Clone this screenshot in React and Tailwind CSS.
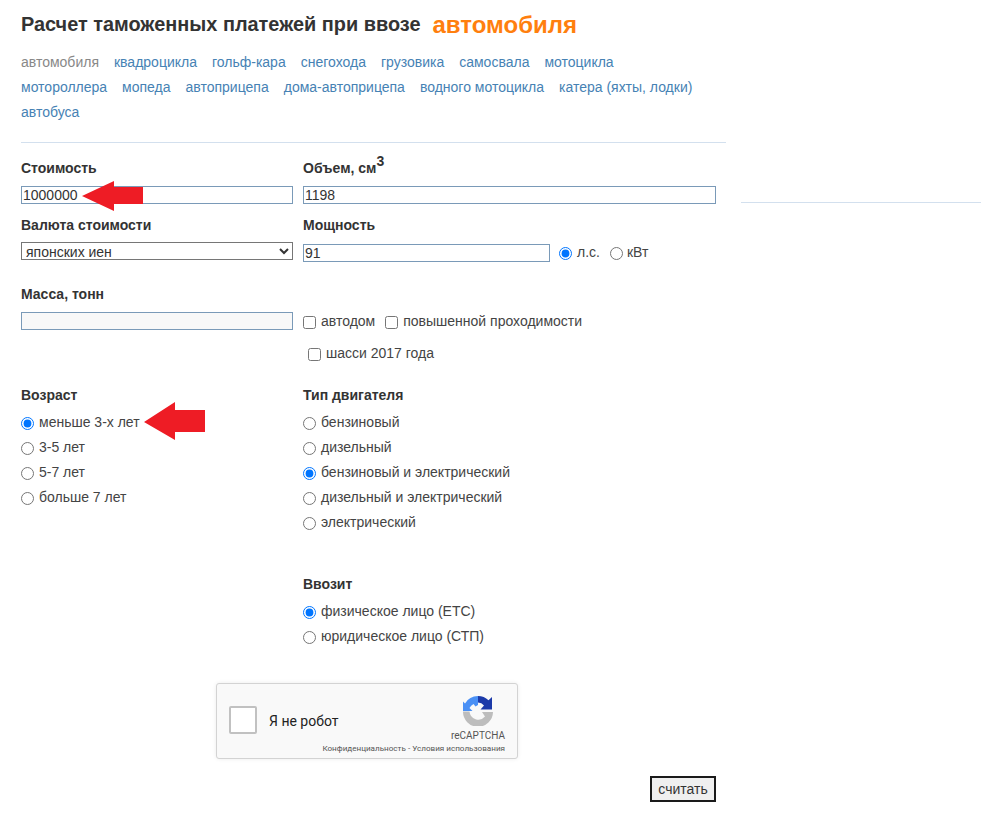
const links = [
  ["автомобиля", true], ["квадроцикла"], ["гольф-кара"], ["снегохода"], ["грузовика"], ["самосвала"], ["мотоцикла"],
  ["мотороллера"], ["мопеда"], ["автоприцепа"], ["дома-автоприцепа"], ["водного мотоцикла"], ["катера (яхты, лодки)"], ["автобуса"],
];

function Radio({ label, checked, name }) {
  return (
    <label className="flex h-[25px] items-center text-[14px] text-[#444]">
      <input type="radio" name={name} defaultChecked={checked} className="m-0 mr-[5px] h-[13px] w-[13px] translate-y-[1px]" />
      {label}
    </label>
  );
}

function Check({ label, className = "" }) {
  return (
    <label className={"flex items-center text-[14px] text-[#444] " + className}>
      <input type="checkbox" className="m-0 mr-[5px] h-[13px] w-[13px] translate-y-[1px]" />
      {label}
    </label>
  );
}

const Label = ({ children, className = "" }) => (
  <div className={"h-[18px] text-[14px] font-bold leading-[18px] text-[#333] " + className}>{children}</div>
);

const inputCls = "block h-[18px] border border-[#7a9ab8] px-[1px] text-[14px] leading-[16px] text-[#333] outline-none";

export default function App() {
  return (
    <div className="relative h-[826px] w-[987px] bg-white font-['Liberation_Sans',Arial,sans-serif]">
      <div className="w-[726px] pl-[21px]">
        <h1 className="flex h-[50px] items-center text-[19.9px] font-bold text-[#333]">
          Расчет таможенных платежей при ввозе
          <span className="ml-[12px] text-[24px] text-[#ff7f0e]">автомобиля</span>
        </h1>
        <div className="flex w-[690px] flex-wrap gap-x-[15px] text-[14px] leading-[25px]">
          {links.map(([t, active]) => (
            <a key={t} className={active ? "text-[#888]" : "text-[#4682b4]"}>{t}</a>
          ))}
        </div>
        <div className="mt-[17px] border-t border-[#d3e0ee]" />

        <div className="mt-[16px] grid grid-cols-[282px_413px]">
          <div>
            <Label>Стоимость</Label>
            <input readOnly value="1000000" className={inputCls + " mt-[9px] w-[272px]"} />
            <Label className="mt-[12px]">Валюта стоимости</Label>
            <select className="mt-[8px] block h-[18px] w-[272px] border border-[#767676] bg-white text-[14px] leading-[16px] text-[#333]">
              <option>японских иен</option>
            </select>
            <Label className="mt-[25px]">Масса, тонн</Label>
            <input readOnly className={inputCls + " mt-[9px] w-[272px] bg-[#f8f8f8]"} />
            <Label className="mt-[56px]">Возраст</Label>
            <div className="mt-[6px]">
              <Radio name="age" label="меньше 3-х лет" checked />
              <Radio name="age" label="3-5 лет" />
              <Radio name="age" label="5-7 лет" />
              <Radio name="age" label="больше 7 лет" />
            </div>
          </div>
          <div>
            <Label>
              Объем, см<span className="relative top-[-7px] text-[14px]">3</span>
            </Label>
            <input readOnly value="1198" className={inputCls + " mt-[9px] w-[413px]"} />
            <Label className="mt-[12px]">Мощность</Label>
            <div className="mt-[8px] flex h-[20px] items-center text-[14px] text-[#444]">
              <input readOnly value="91" className={inputCls + " mt-[2px] w-[247px]"} />
              <label className="ml-[9px] flex items-center">
                <input type="radio" name="pw" defaultChecked className="m-0 mr-[5px] h-[13px] w-[13px] translate-y-[1px]" />л.с.
              </label>
              <label className="ml-[10px] flex items-center">
                <input type="radio" name="pw" className="m-0 mr-[4px] h-[13px] w-[13px] translate-y-[1px]" />кВт
              </label>
            </div>
            <div className="mt-[50px] flex h-[18px] items-center">
              <Check label="автодом" />
              <Check label="повышенной проходимости" className="ml-[10px]" />
            </div>
            <Check label="шасси 2017 года" className="ml-[5px] mt-[14px] h-[18px]" />
            <Label className="mt-[24px]">Тип двигателя</Label>
            <div className="mt-[6px]">
              <Radio name="fuel" label="бензиновый" />
              <Radio name="fuel" label="дизельный" />
              <Radio name="fuel" label="бензиновый и электрический" checked />
              <Radio name="fuel" label="дизельный и электрический" />
              <Radio name="fuel" label="электрический" />
            </div>
            <Label className="mt-[40px]">Ввозит</Label>
            <div className="mt-[6px]">
              <Radio name="who" label="физическое лицо (ЕТС)" checked />
              <Radio name="who" label="юридическое лицо (СТП)" />
            </div>
          </div>
        </div>

        <div className="ml-[195px] mt-[34px] flex h-[76px] w-[302px] rounded-[3px] border border-[#d3d3d3] bg-[#f9f9f9] font-['Roboto',sans-serif] shadow-[0_0_4px_rgba(0,0,0,0.08)]">
          <div className="ml-[12px] mt-[22px] h-[28px] w-[28px] shrink-0 rounded-[2px] border-2 border-[#c1c1c1] bg-white" />
          <div className="ml-[12px] mt-[29px] whitespace-nowrap text-[14px] leading-[17px] text-[#222]">Я не робот</div>
          <div className="ml-auto mr-[12px] flex w-[56px] flex-col items-end">
            <svg viewBox="0 0 30 30" className="mr-[12px] mt-[12px] h-[30px] w-[30px] shrink-0">
              <path d="M15 0A15 15 0 0 0 2 7.500L0 5.500V15H9.500L6.500 12A9.500 9.500 0 0 1 10.500 8L12.500 10.500L15 9Z" fill="#4a90f5" />
              <path d="M15 0A15 15 0 0 1 25.500 4.300L29 1V13.500H17.500L21 9.500A8.500 8.500 0 0 0 15 6.500Z" fill="#1c3aa9" />
              <path d="M0 15.500H6.500A8.800 8.800 0 0 0 22 20.500L19 16H30A15 15 0 0 1 0 15.500Z" fill="#bdbdbd" />
            </svg>
            <div className="mt-[4px] text-[10px] leading-[11px] text-[#555]">reCAPTCHA</div>
            <div className="mt-[2px] whitespace-nowrap text-[8.1px] leading-[10px] text-[#555]">Конфиденциальность - Условия использования</div>
          </div>
        </div>
        <div className="flex justify-end pr-[10px]">
          <button className="mt-[17px] h-[26px] w-[66px] border-2 border-[#1a1a1a] bg-[#efefef] text-[14px] text-[#333]">считать</button>
        </div>
      </div>

      <div className="absolute left-[741px] top-[202px] w-[240px] border-t border-[#d3e0ee]" />

      <svg className="absolute left-0 top-0 h-[826px] w-[987px]" viewBox="0 0 987 826">
        <polygon points="82,196 114,181 114,187 143,187 143,204 114,204 114,211" fill="#ee1c25" />
        <polygon points="144,422 175,402 175,410 205,410 205,432 175,432 175,440" fill="#ee1c25" />
      </svg>
    </div>
  );
}
